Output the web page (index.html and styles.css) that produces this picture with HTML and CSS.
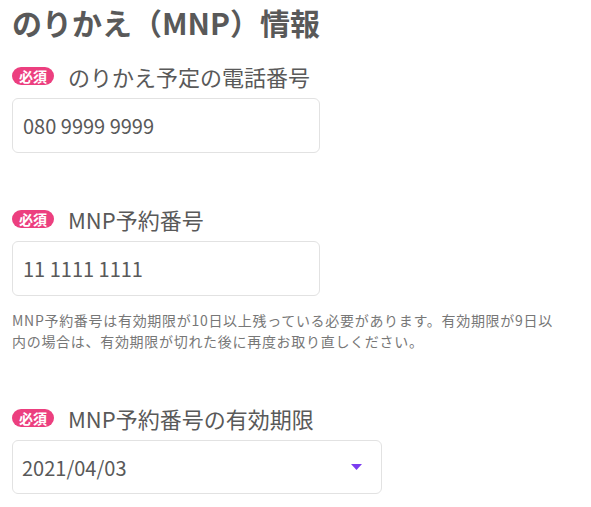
FILE: index.html
```html
<html lang="ja">
<head>
  <meta charset="UTF-8">
  <title>のりかえ（MNP）情報</title>
  <link rel="stylesheet" href="styles.css">
</head>
<body>

  <div class="container">
    <h1>のりかえ（MNP）情報</h1>

    <div class="field">
      <label class="label" for="tel"><span class="badge">必須</span>のりかえ予定の電話番号</label>
      <input type="text" id="tel" class="input" value="080 9999 9999">
    </div>

    <div class="field">
      <label class="label" for="mnp"><span class="badge">必須</span>MNP予約番号</label>
      <input type="text" id="mnp" class="input" value="11 1111 1111">
      <p class="note">MNP予約番号は有効期限が10日以上残っている必要があります。有効期限が9日以内の場合は、有効期限が切れた後に再度お取り直しください。</p>
    </div>

    <div class="field">
      <label class="label" for="limit"><span class="badge">必須</span>MNP予約番号の有効期限</label>
      <div class="select-box">
        <select id="limit" class="select">
          <option>2021/04/03</option>
          <option>2021/04/04</option>
          <option>2021/04/05</option>
        </select>
        <svg class="arrow" width="11" height="6" viewBox="0 0 11 6"><polygon points="0,0 11,0 5.5,6" fill="#7b3cf0"/></svg>
      </div>
    </div>
  </div>

</body>
</html>
```

FILE: styles.css
```css
body {
  margin: 0;
  padding: 0;
  background: white;
  font-family: "Noto Sans CJK JP", "Noto Sans", sans-serif;
  color: #595959;
}

.container {
  padding: 2px 12px 0;
}

h1 {
  margin: 0;
  font-size: 30px;
  line-height: 40px;
  font-weight: 700;
  color: #595959;
}

.field {
  margin-top: 18px;
}

.field + .field {
  margin-top: 50px;
}

.label {
  display: flex;
  align-items: center;
  height: 32px;
  font-size: 22px;
  color: #595959;
}

.badge {
  display: inline-block;
  width: 42px;
  height: 18px;
  line-height: 18px;
  margin-right: 14px;
  border-radius: 9px;
  background: #ec3f7f;
  color: white;
  font-size: 14px;
  font-weight: 700;
  text-align: center;
}

.input {
  display: block;
  box-sizing: border-box;
  width: 308px;
  height: 55px;
  margin-top: 6px;
  padding: 0 10px;
  font-family: inherit;
  font-size: 20px;
  color: #595959;
  border: 1px solid #e2e2e2;
  border-radius: 6px;
  background: white;
}

.note {
  margin: 14px 0 0;
  max-width: 550px;
  font-size: 14px;
  line-height: 21px;
  letter-spacing: 0.05em;
  color: #777;
}

.select-box {
  display: flex;
  align-items: center;
  box-sizing: border-box;
  width: 370px;
  height: 54px;
  margin-top: 6px;
  padding-right: 19px;
  border: 1px solid #e2e2e2;
  border-radius: 6px;
}

.select {
  flex: 1;
  height: 100%;
  padding: 0 9px;
  border: none;
  outline: none;
  background: transparent;
  font-family: inherit;
  font-size: 20px;
  color: #595959;
  appearance: none;
  -webkit-appearance: none;
}
```
